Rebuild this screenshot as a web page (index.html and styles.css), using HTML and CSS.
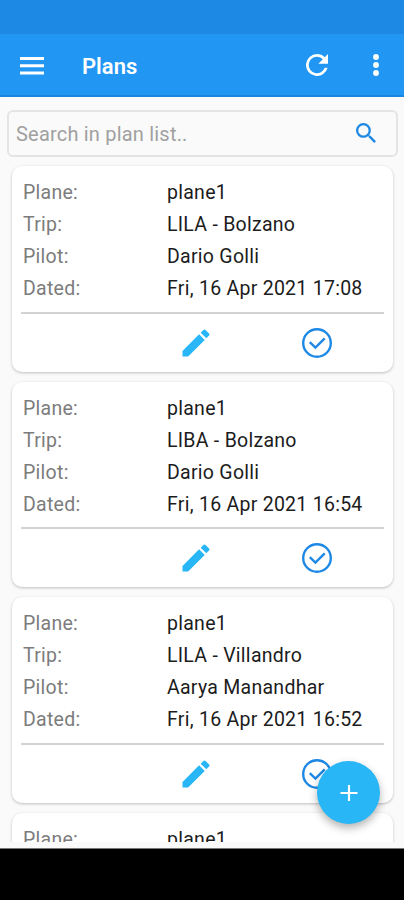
FILE: index.html
```html
<!DOCTYPE html>
<html lang="en">
<head>
<meta charset="utf-8">
<meta name="viewport" content="width=device-width, initial-scale=1">
<title>Plans</title>
<link rel="stylesheet" href="styles.css">
</head>
<body>
<svg class="sprite" aria-hidden="true">
  <symbol id="edit" viewBox="0 0 24 24"><path d="M3 17.25V21h3.75L17.81 9.94l-3.75-3.75L3 17.25zM20.71 7.04a1 1 0 0 0 0-1.41l-2.34-2.34a1 1 0 0 0-1.41 0l-1.83 1.83 3.75 3.75 1.83-1.83z"/></symbol>
  <symbol id="done" viewBox="0 0 30 30"><circle cx="15" cy="15" r="13.8"/><path d="M7.8 14.2l5.6 5.4 9.3-9.3"/></symbol>
</svg>
<div class="screen">
  <div class="status"></div>
  <header class="bar">
    <svg class="menu" viewBox="0 0 24 18"><path d="M0 0h24v3H0zM0 7.2h24v3H0zM0 14.4h24v3H0z"/></svg>
    <h1 class="title">Plans</h1>
    <svg class="refresh" viewBox="4 4 16 16"><path d="M17.65 6.35A7.96 7.96 0 0 0 12 4a8 8 0 1 0 7.73 10h-2.08A6 6 0 1 1 12 6c1.66 0 3.14.69 4.22 1.78L13 11h7V4l-2.35 2.35z"/></svg>
    <svg class="more" viewBox="0 0 6 22"><circle cx="3" cy="3" r="2.9"/><circle cx="3" cy="11" r="2.9"/><circle cx="3" cy="19" r="2.9"/></svg>
  </header>
  <main class="content">
    <div class="search">
      <span class="hint">Search in plan list..</span>
      <svg class="lens" viewBox="3 3 17.5 17.5"><path d="M15.5 14h-.79l-.28-.27A6.47 6.47 0 0 0 16 9.5 6.5 6.5 0 1 0 9.5 16c1.61 0 3.09-.59 4.23-1.57l.27.28v.79l5 4.99L20.49 19l-4.99-5zm-6 0a4.5 4.5 0 1 1 0-9 4.5 4.5 0 0 1 0 9z"/></svg>
    </div>
    <div class="list">
      <article class="card">
        <dl class="rows">
          <dt>Plane:</dt><dd>plane1</dd>
          <dt>Trip:</dt><dd>LILA - Bolzano</dd>
          <dt>Pilot:</dt><dd>Dario Golli</dd>
          <dt>Dated:</dt><dd>Fri, 16 Apr 2021 17:08</dd>
        </dl>
        <div class="actions"><svg class="edit"><use href="#edit"/></svg><svg class="done"><use href="#done"/></svg></div>
      </article>
      <article class="card">
        <dl class="rows">
          <dt>Plane:</dt><dd>plane1</dd>
          <dt>Trip:</dt><dd>LIBA - Bolzano</dd>
          <dt>Pilot:</dt><dd>Dario Golli</dd>
          <dt>Dated:</dt><dd>Fri, 16 Apr 2021 16:54</dd>
        </dl>
        <div class="actions"><svg class="edit"><use href="#edit"/></svg><svg class="done"><use href="#done"/></svg></div>
      </article>
      <article class="card">
        <dl class="rows">
          <dt>Plane:</dt><dd>plane1</dd>
          <dt>Trip:</dt><dd>LILA - Villandro</dd>
          <dt>Pilot:</dt><dd>Aarya Manandhar</dd>
          <dt>Dated:</dt><dd>Fri, 16 Apr 2021 16:52</dd>
        </dl>
        <div class="actions"><svg class="edit"><use href="#edit"/></svg><svg class="done"><use href="#done"/></svg></div>
      </article>
      <article class="card">
        <dl class="rows">
          <dt>Plane:</dt><dd>plane1</dd>
        </dl>
      </article>
    </div>
    <button class="fab" aria-label="Add plan"><svg viewBox="0 0 18 18"><path d="M9 1v16M.5 9h17"/></svg></button>
  </main>
  <div class="navbar"></div>
</div>
</body>
</html>
```
FILE: styles.css
```css
* { box-sizing: border-box; }
body { margin: 0; font-family: Roboto, "Liberation Sans", sans-serif; }
svg { display: block; flex: none; }
.sprite { display: none; }
.screen { width: 404px; height: 900px; display: flex; flex-direction: column; background: #fafafa; overflow: hidden; }
.status { height: 34px; flex: none; background: #1e88e5; }
.bar {
  height: 63px; flex: none; display: flex; align-items: center;
  padding: 1px 25px 0 20px; background: #2196f3; border-bottom: 2px solid #1b87e0; fill: #fff;
}
.menu { width: 24px; height: 18px; margin-top: 1px; }
.title { flex: 1; margin: 4px 0 0 38px; font-size: 22px; font-weight: 600; line-height: 28px; letter-spacing: 0; color: #fff; }
.refresh { width: 22px; height: 22px; margin-right: 45px; }
.more { width: 6px; height: 22px; }
.content { height: 751px; flex: none; position: relative; padding: 13px 6px 0 7px; display: flex; flex-direction: column; }
.search {
  height: 47px; flex: none; display: flex; align-items: center; justify-content: space-between;
  padding: 1px 20px 0 7px; border: 2px solid #e4e4e4; border-radius: 6px; background: #fafafa;
}
.hint { font-size: 20px; color: #a0a0a0; letter-spacing: .2px; }
.lens { width: 20px; height: 20px; fill: #1e88e5; margin-top: -3px; }
.list { height: 685px; flex: none; margin: 0 -6px 0 -7px; padding: 9px 11px 0 12px; overflow: hidden; }
.card {
  height: 205.5px; margin-bottom: 10px; padding: 11px 9px 0; border-radius: 10px; background: #fff;
  box-shadow: 0 1px 3px rgba(0, 0, 0, .24);
}
.rows {
  height: 136.5px; margin: 0; padding-left: 2px; display: grid; grid-template-columns: 144px 1fr;
  grid-auto-rows: 32px; line-height: 32px; font-size: 19.5px; letter-spacing: .27px; border-bottom: 2px solid #d3d3d3;
}
.rows dt { color: #7c7c7c; }
.rows dd { margin: 0; color: #1c1c1c; white-space: nowrap; }
.actions { height: 58px; display: grid; grid-template-columns: 122px 1fr 1fr; align-items: center; justify-items: center; }
.edit { grid-column: 2; width: 36px; height: 36px; fill: #29b6f6; margin-right: 14px; }
.done { width: 30px; height: 30px; fill: none; stroke: #1e88e5; stroke-width: 2.4; margin-right: 14px; }
.fab {
  position: absolute; right: 24px; bottom: 24px; width: 63px; height: 63px; padding: 0; border: 0; border-radius: 50%;
  display: grid; place-items: center; background: #29b6f6; box-shadow: 0 4px 8px rgba(0, 0, 0, .3);
}
.fab svg { width: 18px; height: 18px; fill: none; stroke: #fff; stroke-width: 2.2; }
.navbar { flex: 1; background: #000; border-top: 1px solid #777; }
```
